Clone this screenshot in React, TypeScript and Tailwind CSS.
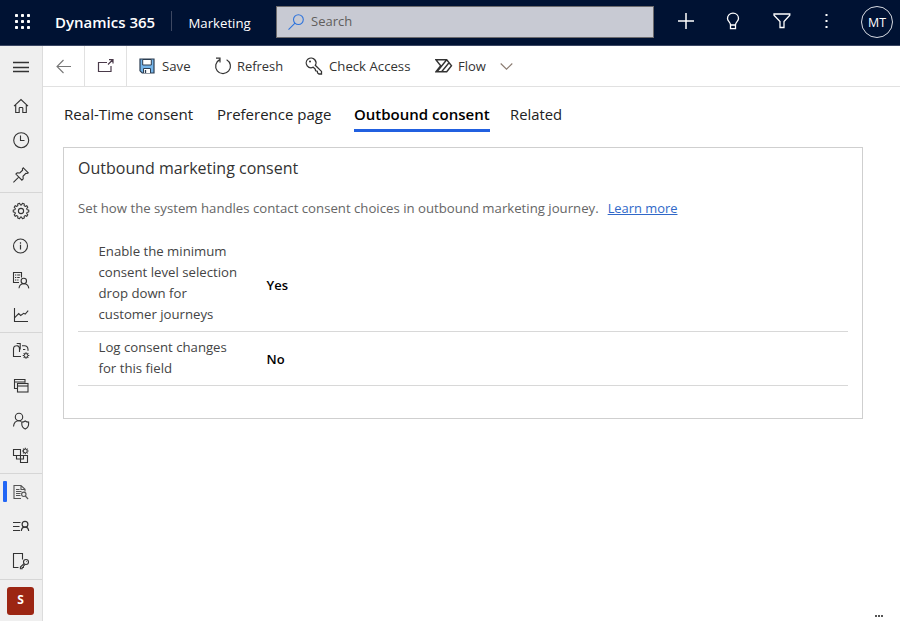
import type { ReactNode } from "react";

type IconProps = { children: ReactNode; className?: string; size?: number; sw?: number };

function Icon({ children, className = "", size = 20, sw = 1.1 }: IconProps) {
  return (
    <svg
      className={`block shrink-0 ${className}`}
      width={size}
      height={size}
      viewBox={`0 0 ${size} ${size}`}
      fill="none"
      stroke="currentColor"
      strokeWidth={sw}
    >
      {children}
    </svg>
  );
}

function gearPath(cx: number, cy: number, outer: number, inner: number, teeth: number) {
  const step = (Math.PI * 2) / teeth;
  const points: string[] = [];
  for (let i = 0; i < teeth; i++) {
    const a = i * step;
    const corners: [number, number][] = [
      [a - step * 0.34, inner],
      [a - step * 0.2, outer],
      [a + step * 0.2, outer],
      [a + step * 0.34, inner],
    ];
    for (const [t, r] of corners) {
      points.push(`${(cx + Math.cos(t) * r).toFixed(2)} ${(cy + Math.sin(t) * r).toFixed(2)}`);
    }
  }
  return `M${points.join("L")}Z`;
}

function MiniGear({ cx, cy }: { cx: number; cy: number }) {
  return (
    <g transform={`translate(${cx} ${cy})`}>
      <circle r="1.9" strokeWidth="1" />
      <path d="M0-3.3V-2M0 2v1.300M-3.300 0H-2M2 0h1.300M-2.300-2.300l.9.9M1.400 1.400l.9.9M-2.300 2.300l.9-.9M1.400-1.400l.9-.9" strokeWidth="1.100" />
    </g>
  );
}

const menuIcon = <Icon><path d="M2 5.500H18M2 10.500H18M2 14.500H18" strokeWidth="1.300" /></Icon>;
const homeIcon = <Icon><path d="M3 10.2L10 3.6l7 6.6M4.7 8.8v7.7h3.5v-4.2c0-.5.3-.8.8-.8h2c.5 0 .8.3.8.8v4.2h3.5V8.8" /></Icon>;
const clockIcon = <Icon><circle cx="10.2" cy="10.2" r="7.5" /><path d="M9.5 5.5v5h4" /></Icon>;
const pinIcon = <Icon><path d="M12.3 2.8l5 5-1.2.7-1.3-.1-2.8 2.9.2 2.5-1.3 1.3-6-6 1.3-1.3 2.6.2 2.8-2.8-.2-1.3zM7.7 12.2L2.4 17.4" /></Icon>;
const gearIcon = (
  <Icon>
    <path d={gearPath(10, 10, 7.8, 6.2, 10)} strokeLinejoin="round" />
    <circle cx="10" cy="10" r="2.6" />
  </Icon>
);
const infoIcon = <Icon><circle cx="9.5" cy="10" r="7" /><path d="M9.5 8.8v4.7M9.5 6.3v1.4" strokeWidth="1.2" /></Icon>;
const listPersonIcon = (
  <Icon>
    <path d="M8 12.5H2.500v-10h8v5" />
    <path d="M4 5h1.3M6.2 5h3M4 7.5h1.3M6.2 7.5h2.5M4 10h1.3M6.2 10h1.3" />
    <circle cx="12.8" cy="11" r="2.7" />
    <path d="M8 18.3c.3-2.8 2.1-4.5 4.8-4.5s4.6 1.7 5 4.5" />
  </Icon>
);
const chartIcon = <Icon><path d="M3.5 3v13.5H17" /><path d="M3.7 12.6l4-4.1 2 2 3-2.2 1.5.7 3-3.3" /></Icon>;
const mailboxIcon = (
  <Icon>
    <path d="M10 15.500H2.500V8c0-2 1.300-3.300 3-3.300S8.500 6 8.500 8v3M5.300 4.700h2.200M11 4.700h2.500c2 0 3.300 1.200 3.500 3.500v1.600M5.700 2.500h3.800M9.200 2v6.500M12 8.500h2.300" />
    <MiniGear cx={15} cy={14.5} />
  </Icon>
);
const windowsIcon = (
  <Icon>
    <path d="M6.200 12.500H3.500v-9h10.500v3.300M3.500 6h10.500" />
    <rect x="6.5" y="7.5" width="10.500" height="8.500" />
    <path d="M6.5 10H17" />
  </Icon>
);
const personShieldIcon = (
  <Icon>
    <circle cx="8" cy="6" r="3.7" />
    <path d="M2.5 15.5c.3-3.2 2.3-5.7 5.5-5.7 1 0 1.6.2 2.3.6" />
    <path d="M14.2 10c1 .7 2 1.1 3.4 1.1v2c0 2.5-1.3 4-3.4 5-2.1-1-3.4-2.5-3.4-5v-2c1.400 0 2.400-.4 3.400-1.100z" />
  </Icon>
);
const blocksIcon = (
  <Icon>
    <path d="M9.500 9.500h-7v-6h7zM9.500 9.500h7v7h-7zM5.500 9.500v3.500h4M9.500 13h3V9.500" />
    <MiniGear cx={14.3} cy={5} />
  </Icon>
);
const docSearchIcon = (
  <Icon className="text-[#555]">
    <path d="M10 16.500H3v-13h7l4 3.800v2.200M10 3.700v3.800h3.800" />
    <path d="M5 7.500h3.500M5 9.500h5.500M5 11.500h4.500M5 13.500h4.500" />
    <circle cx="12.800" cy="12.300" r="2.200" />
    <path d="M14.300 14l2.800 3" />
  </Icon>
);
const listUserIcon = (
  <Icon sw={1.2}>
    <path d="M2 6.500h7.500M2 10.500h6.500M2 14.500h7" />
    <circle cx="14" cy="8.200" r="2.900" />
    <path d="M10.300 15c.2-2.400 1.500-3.900 3.700-3.900s3.500 1.500 3.700 3.900" />
  </Icon>
);
const docKeyIcon = (
  <Icon>
    <path d="M7.500 16.500H2.500v-14h9v6" />
    <circle cx="15" cy="11" r="2.500" />
    <path d="M13 12.600l-3.600 3.500v1.600h1.700l.1-1.200 1.200-.1v-1.200l1.500-1.500" />
    <path d="M15.400 10.500h.6" />
  </Icon>
);

function NavItem({ children, className }: { children: ReactNode; className: string }) {
  return <button className={`flex w-full shrink-0 items-center justify-center ${className}`}>{children}</button>;
}

function Sidebar() {
  return (
    <nav className="flex w-[43px] shrink-0 flex-col border-r border-[#dcdcdc] bg-[#efefef] text-[#333]">
      <NavItem className="h-[42px]">{menuIcon}</NavItem>
      <NavItem className="h-[35px]">{homeIcon}</NavItem>
      <NavItem className="h-[34px]">{clockIcon}</NavItem>
      <NavItem className="h-[35px]">{pinIcon}</NavItem>
      <div className="flex flex-col border-t border-[#d6d6d6]">
        <NavItem className="h-[36px]">{gearIcon}</NavItem>
        <NavItem className="h-[33px]">{infoIcon}</NavItem>
        <NavItem className="h-[36px]">{listPersonIcon}</NavItem>
        <NavItem className="h-[34px]">{chartIcon}</NavItem>
      </div>
      <div className="flex flex-col border-t border-[#d6d6d6]">
        <NavItem className="h-[36px]">{mailboxIcon}</NavItem>
        <NavItem className="h-[34px]">{windowsIcon}</NavItem>
        <NavItem className="h-[35px]">{personShieldIcon}</NavItem>
        <NavItem className="h-[35px]">{blocksIcon}</NavItem>
      </div>
      <div className="flex flex-col border-t border-[#d6d6d6]">
        <div className="flex h-[35px] items-center">
          <div className="ml-[3px] h-[21px] w-1 rounded-[1px] bg-[#2266f5]" />
          <div className="ml-1">{docSearchIcon}</div>
        </div>
        <NavItem className="h-[34px]">{listUserIcon}</NavItem>
        <NavItem className="h-[36px]">{docKeyIcon}</NavItem>
      </div>
      <div className="flex flex-1 justify-center border-t border-[#d6d6d6] pt-[7px] pr-[1px]">
        <div className="flex h-7 w-[27px] items-center justify-center rounded-[3px] bg-[#9c2613] pb-[2px] text-[12px] font-bold text-white">S</div>
      </div>
    </nav>
  );
}

function Header() {
  return (
    <header className="flex h-[46px] shrink-0 items-center border-b border-[#3a4663] bg-[#001233] text-white">
      <svg className="mt-[-2px] ml-[15px] block" width="15" height="15" viewBox="0 0 15 15" fill="#fff">
        {[0, 6, 12].map((y) => [0, 6, 12].map((x) => <rect key={`${x}-${y}`} x={x} y={y} width="3" height="3" rx=".8" />))}
      </svg>
      <div className="ml-[25px] w-[101px] text-[15px] font-semibold whitespace-nowrap">Dynamics 365</div>
      <div className="mt-[-3px] ml-[15px] h-5 w-px bg-[#3d4862]" />
      <div className="ml-[16.500px] w-[87.500px] pt-[2px] text-[13.200px] whitespace-nowrap">Marketing</div>
      <div className="mt-[-2px] flex h-[32px] w-[378px] items-center border border-[#6c6a6c] bg-[#c8cad3] pl-[11px] text-[#605e5c]">
        <Icon size={16} className="text-[#2f74dc]"><circle cx="10.4" cy="5.6" r="4.9" /><path d="M7 9.200L.5 15.600" /></Icon>
        <span className="mt-px ml-[7px] text-[13px]">Search</span>
      </div>
      <div className="flex flex-1 items-center pb-[3px]">
        <Icon size={16} sw={1.5} className="ml-[24px]"><path d="M8 0v16M0 8h16" /></Icon>
        <Icon size={18} sw={1.3} className="ml-[30px]">
          <path d="M6.500 13c0-3.100-3-3.600-3-6.500C3.500 3.300 5.900 1.200 9 1.200s5.500 2.100 5.500 5.300c0 2.900-3 3.400-3 6.500zM6.500 13v3.600h5V13" />
        </Icon>
        <Icon size={18} sw={1.3} className="ml-[31px]"><path d="M1 2h15.800v1.200L11 9.500v6H7v-6L1 3.200z" /></Icon>
        <svg className="ml-[34px] block" width="3" height="14" viewBox="0 0 3 14" fill="#fff">
          <rect x=".5" width="2" height="2" /><rect x=".5" y="6" width="2" height="2" /><rect x=".5" y="12" width="2" height="2" />
        </svg>
        <div className="mt-[2px] ml-[33px] flex h-8 w-8 shrink-0 items-center justify-center rounded-full border border-[#d7dae1] pt-[2px] text-[12.400px]">MT</div>
      </div>
    </header>
  );
}

function CommandBar() {
  return (
    <div className="flex h-[41px] shrink-0 items-center border-b border-[#e1e1e1] text-[13.200px] whitespace-nowrap text-[#333]">
      <div className="flex h-full w-[42px] items-center justify-center border-r border-[#e1e1e1] text-[#777]">
        <Icon size={16}><path d="M1 8.500h14M7.500 2L1 8.500 7.500 15" /></Icon>
      </div>
      <div className="flex h-full w-[42px] items-center justify-center border-r border-[#e1e1e1] text-[#4a3a4a]">
        <Icon size={18} sw={1.2}><path d="M10 5.500H1.500v9h12.500V9M11 7.500L15.500 3M12 2.600h4v4" /></Icon>
      </div>
      <svg className="ml-[12px] block" width="16" height="16" viewBox="0 0 16 16">
        <path d="M1 1h14v14H3.200L1 12.800z" fill="#75b5ea" stroke="#2c3d50" strokeWidth="1.200" />
        <path d="M3.700 1.500h8.600v5.500H3.700z" fill="#fff" stroke="#2c3d50" />
        <path d="M4.500 15v-4.500h7V15" fill="#fff" stroke="#2c3d50" />
        <path d="M6.500 12v3" stroke="#2c3d50" strokeWidth="1.300" />
      </svg>
      <span className="mt-[2px] ml-[7px] w-[52px]">Save</span>
      <Icon size={18} sw={1.200}>
        <path d="M5.700 2.600A7.400 7.400 0 1 0 12.600 2.700M2 1.200h4v4.300" />
      </Icon>
      <span className="mt-[2px] ml-[5px] w-[68px] text-[12.900px]">Refresh</span>
      <Icon size={18} sw={1.300}>
        <path d="M10.300 8.300c1-1.700.8-4-.5-5.500C8.100.8 5.100.5 3.100 2.100 1 3.800.6 6.700 2.200 8.800c1.500 1.900 4 2.400 6.100 1.400l1.900 1.900.4 1.700 1.700.4.3 1.800 1.400 1h2.500v-2.600z" />
        <circle cx="5" cy="4.600" r="1" fill="currentColor" stroke="none" />
      </Icon>
      <span className="mt-[2px] ml-[6px] w-[106px]">Check Access</span>
      <Icon size={18} sw={1.400}>
        <path d="M.9 2.700h10.800l4.800 6-4.800 6H.9l4.800-6zM11.700 2.700L2.200 14.500M14 5.700L6.800 14.500" />
      </Icon>
      <span className="mt-[2px] ml-[5px] w-[42px] text-[13px]">Flow</span>
      <Icon size={13} className="text-[#8a7b70]"><path d="M.7 3.500l5.800 5.700 5.800-5.700" /></Icon>
    </div>
  );
}

function Tab({ label, active, className }: { label: string; active?: boolean; className: string }) {
  return (
    <button
      className={`h-[29px] border-b-[3px] pb-[4px] text-left whitespace-nowrap ${
        active ? "border-[#2160e0] font-semibold text-black" : "border-transparent text-[#222]"
      } ${className}`}
    >
      {label}
    </button>
  );
}

function Row({ lines, value, className }: { lines: string[]; value: string; className: string }) {
  return (
    <div className={`flex border-b border-[#d8d8d8] pl-[20.500px] ${className}`}>
      <div className="w-[168px] text-[13.200px] leading-[21px] text-[#444]">
        {lines.map((l) => <div key={l} className="whitespace-nowrap">{l}</div>)}
      </div>
      <div className="flex items-center text-[13px] font-semibold text-black">{value}</div>
    </div>
  );
}

export default function App() {
  return (
    <div className="flex h-[621px] w-[900px] flex-col overflow-hidden bg-white font-['Open_Sans','Noto_Sans',sans-serif]">
      <Header />
      <div className="flex min-h-0 flex-1">
        <Sidebar />
        <div className="flex flex-1 flex-col">
          <CommandBar />
          <div className="ml-[21px] flex pt-[16px]">
            <Tab label="Real-Time consent" className="w-[153px] text-[15.100px]" />
            <Tab label="Preference page" className="mr-[21px] w-[116px] text-[15px]" />
            <Tab label="Outbound consent" active className="mr-[20px] w-[136px] text-[15px]" />
            <Tab label="Related" className="text-[14.800px]" />
          </div>
          <section className="mt-[15px] ml-[20px] h-[272px] w-[800px] border border-[#cfcfcf] px-[14px] pt-[8px]">
            <h2 className="text-[16px] leading-6 text-[#333]">Outbound marketing consent</h2>
            <p className="mt-[18px] flex text-[13.200px] leading-5 whitespace-nowrap text-[#666]">
              Set how the system handles contact consent choices in outbound marketing journey.
              <a className="ml-[9px] text-[12.900px] text-[#3068c8] underline">Learn more</a>
            </p>
            <Row
              className="mt-[23px] h-[91px]"
              value="Yes"
              lines={["Enable the minimum", "consent level selection", "drop down for", "customer journeys"]}
            />
            <Row className="h-[54px] pt-[5px] pb-[2px]" value="No" lines={["Log consent changes", "for this field"]} />
          </section>
          <div className="mt-auto mr-[17px] mb-[4px] flex justify-end gap-px">
            <i className="h-[2px] w-[2px] bg-[#555]" />
            <i className="h-[2px] w-[2px] bg-[#555]" />
            <i className="h-[2px] w-[2px] bg-[#555]" />
          </div>
        </div>
      </div>
    </div>
  );
}
